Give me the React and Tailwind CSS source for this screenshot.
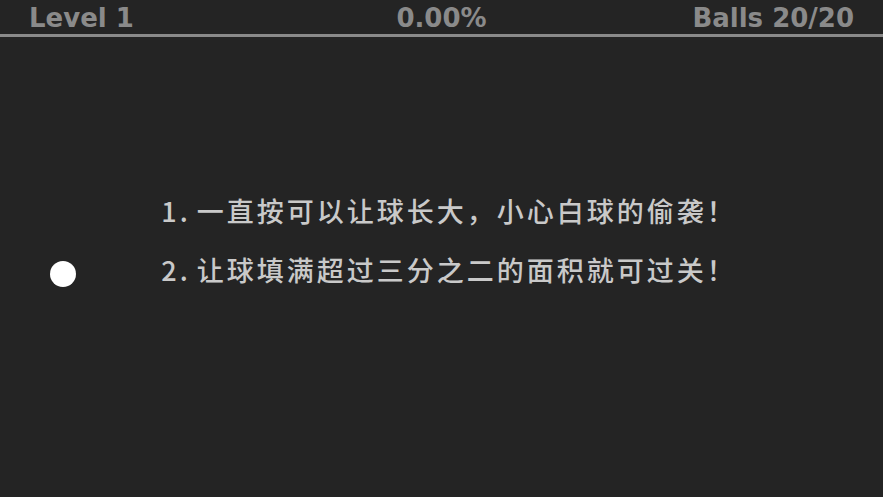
export default function App() {
  return (
    <div className="w-[883px] h-[497px] bg-[#242424] flex flex-col overflow-hidden">
      {/* HUD */}
      <div
        className="grid grid-cols-3 items-center h-[37px] px-[29px] border-b-[3px] border-[#8a8a8a] text-[#8a8a8a] text-[26px] font-bold leading-none"
        style={{ fontFamily: '"DejaVu Sans", sans-serif' }}
      >
        <span className="pt-[1px]">Level 1</span>
        <span className="pt-[1px] text-center">0.00%</span>
        <span className="pt-[1px] text-right">Balls 20/20</span>
      </div>

      {/* Play field */}
      <div className="relative flex-1 flex items-center justify-center pl-[15px]">
        <div className="absolute left-[50px] top-[224px] w-[26px] h-[26px] rounded-full bg-white" />
        <div
          className="flex flex-col gap-[30px] pb-[54px] text-[#c9c9c9] text-[27px] leading-[29px] tracking-[3px] font-medium"
          style={{ fontFamily: '"Noto Sans CJK SC", "Noto Sans", sans-serif' }}
        >
          <p><span className="mr-[6px]">1.</span>一直按可以让球长大，小心白球的偷袭！</p>
          <p><span className="mr-[6px]">2.</span>让球填满超过三分之二的面积就可过关！</p>
        </div>
      </div>
    </div>
  )
}
